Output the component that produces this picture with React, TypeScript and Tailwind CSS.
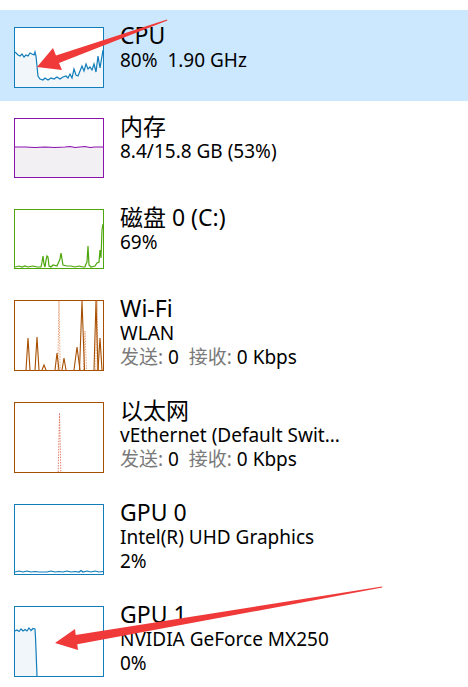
import React from "react";

const FONT = { fontFamily: '"Noto Sans", "Noto Sans CJK SC", sans-serif' };

type GraphProps = { h: number; color: string; children: React.ReactNode };

function Graph({ h, color, children }: GraphProps) {
  return (
    <div
      className="w-[90px] shrink-0 border bg-white"
      style={{ height: h, borderColor: color }}
    >
      <svg width="88" height={h - 2} viewBox={`0 0 88 ${h - 2}`} className="block">
        {children}
      </svg>
    </div>
  );
}

const cpuPts: [number, number][] = [
  [0, 24], [3, 27], [5, 28], [7, 26], [9, 29], [11, 27], [13, 28], [15, 25], [17, 26], [19, 27],
  [20, 24], [21, 28], [22, 38], [23, 48], [25, 51], [28, 52], [30, 50], [33, 52], [36, 50],
  [39, 51], [42, 49], [45, 51], [48, 49], [51, 48], [53, 50], [55, 46], [57, 50], [59, 41],
  [61, 47], [63, 48], [65, 43], [67, 38], [69, 43], [71, 36], [73, 41], [75, 39], [77, 42],
  [79, 36], [81, 44], [83, 28], [85, 40], [86, 34], [88, 22],
];

const toStr = (p: [number, number][]) => p.map(([x, y]) => `${x},${y}`).join(" ");

function CpuGraph() {
  const line = toStr(cpuPts);
  return (
    <Graph h={61} color="#117dbb">
      <polygon points={`0,59 ${line} 88,59`} fill="#f1f6fa" />
      <polyline points={line} fill="none" stroke="#117dbb" strokeWidth="1.2" />
    </Graph>
  );
}

function MemGraph() {
  const line = "0,28 10,28 20,28.5 30,28 40,28.5 50,28 55,27.5 60,28.5 65,28 70,27.5 75,28.5 80,28 88,28";
  return (
    <Graph h={60} color="#8b12ae">
      <polygon points={`0,58 ${line} 88,58`} fill="#f3f0f4" />
      <polyline points={line} fill="none" stroke="#8b12ae" strokeWidth="1.2" />
    </Graph>
  );
}

function DiskGraph() {
  const line =
    "0,57 4,56 7,57 10,56 13,57 18,56 22,57 26,57 27,52 28,46 29,54 30,57 31,50 32,46 33,47 34,56 36,57 38,55 42,56 45,49 46,43 48,55 52,56 56,56 60,57 64,56 68,57 70,57 71,54 72,52 73,36 74,55 76,57 80,56 82,53 84,52 85,40 86,48 87,20 88,14";
  return (
    <Graph h={60} color="#4da60c">
      <polyline points={line} fill="none" stroke="#4da60c" strokeWidth="1.2" />
    </Graph>
  );
}

function spike(x: number, peak: number, w: number, base: number) {
  return `${x - w},${base} ${x},${peak} ${x + w},${base}`;
}

function WifiGraph() {
  const c = "#a74f01";
  const d = "#e39a6d";
  const base = 69;
  const solid: [number, number, number][] = [
    [13, 37, 2], [22, 36, 2], [29, 64, 2], [42, 52, 2], [49, 57, 2], [62, 46, 3], [67, 0, 2.5], [81, 0, 2], [85, 37, 2],
  ];
  return (
    <Graph h={71} color={c}>
      <polyline points={spike(44, 0, 1.2, base)} fill="none" stroke={d} strokeWidth="0.9" strokeDasharray="1.5 1.2" />
      <polyline points={spike(82, 0, 1.2, base)} fill="none" stroke={d} strokeWidth="0.9" strokeDasharray="1.5 1.2" />
      <polyline points={spike(70, 30, 1.5, base)} fill="none" stroke={d} strokeWidth="0.9" strokeDasharray="1.5 1.2" />
      {solid.map(([x, p, w], i) => (
        <polyline key={i} points={spike(x, p, w, base)} fill="none" stroke={c} strokeWidth="1.1" />
      ))}
    </Graph>
  );
}

function EthGraph() {
  return (
    <Graph h={71} color="#a74f01">
      <polyline points={spike(44.5, 10, 1.3, 69)} fill="none" stroke="#e0715a" strokeWidth="0.9" strokeDasharray="1.5 1.2" />
    </Graph>
  );
}

function Gpu0Graph() {
  const line = "0,67 4,66 8,67 12,66 16,67 20,66.5 24,67 28,67 32,67 36,66 40,67 44,66.5 48,67 52,66 56,67 60,66.5 64,67 66,65.5 68,67 72,66 76,67 80,66 84,67 88,66.5";
  return (
    <Graph h={71} color="#117dbb">
      <polyline points={line} fill="none" stroke="#117dbb" strokeWidth="1.2" />
    </Graph>
  );
}

function Gpu1Graph() {
  const line = "0,24 2,23 4,24.5 6,22 8,24 10,22.5 12,24 14,21 16,23.5 18,21.5 20,22 20.5,30 22,69";
  return (
    <Graph h={71} color="#117dbb">
      <polygon points={`0,69 ${line}`} fill="#f1f6fa" />
      <polyline points={line} fill="none" stroke="#117dbb" strokeWidth="1.2" />
    </Graph>
  );
}

type RowProps = {
  graph: React.ReactNode;
  title: string;
  lines: React.ReactNode[];
  h: number;
  selected?: boolean;
};

function Row({ graph, title, lines, h, selected }: RowProps) {
  return (
    <div
      className={`flex items-start pl-[14px] pt-[17px] ${selected ? "bg-[#cce8ff]" : "bg-white"}`}
      style={{ height: h }}
    >
      {graph}
      <div className="ml-[16px] mt-[-4px] flex flex-col text-black" style={FONT}>
        <div className="text-[23px] leading-[24px] whitespace-nowrap">{title}</div>
        <div className="mt-[2px] flex flex-col">
          {lines.map((l, i) => (
            <div key={i} className="text-[19px] leading-[23.5px] whitespace-pre">
              {l}
            </div>
          ))}
        </div>
      </div>
    </div>
  );
}

function NetLine() {
  return (
    <span className="whitespace-pre">
      <span className="text-[#7a7a7a]">发送: </span>
      <span>0  </span>
      <span className="text-[#7a7a7a]">接收: </span>
      <span>0 Kbps</span>
    </span>
  );
}

function Arrows() {
  return (
    <svg
      className="pointer-events-none absolute left-0 top-0"
      width="468"
      height="687"
      viewBox="0 0 468 687"
    >
      <polygon
        points="37,67 53,48 56,55.5 167,19.4 167.4,20.6 59,63 62,70"
        fill="#f03a3a"
      />
      <polygon
        points="55,643 75,629 75.7,635 382,586.6 382.3,587.6 77.3,644.2 78,650"
        fill="#f03a3a"
      />
    </svg>
  );
}

export default function App() {
  return (
    <div className="relative h-[687px] w-[468px] overflow-hidden bg-white pt-[10px]" style={FONT}>
      <Row h={91} selected graph={<CpuGraph />} title="CPU" lines={["80%  1.90 GHz"]} />
      <Row h={91} graph={<MemGraph />} title="内存" lines={["8.4/15.8 GB (53%)"]} />
      <Row h={91} graph={<DiskGraph />} title="磁盘 0 (C:)" lines={["69%"]} />
      <Row h={102} graph={<WifiGraph />} title="Wi-Fi" lines={["WLAN", <NetLine key="n" />]} />
      <Row
        h={102}
        graph={<EthGraph />}
        title="以太网"
        lines={["vEthernet (Default Swit...", <NetLine key="n" />]}
      />
      <Row h={102} graph={<Gpu0Graph />} title="GPU 0" lines={["Intel(R) UHD Graphics", "2%"]} />
      <Row h={102} graph={<Gpu1Graph />} title="GPU 1" lines={["NVIDIA GeForce MX250", "0%"]} />
      <Arrows />
    </div>
  );
}
